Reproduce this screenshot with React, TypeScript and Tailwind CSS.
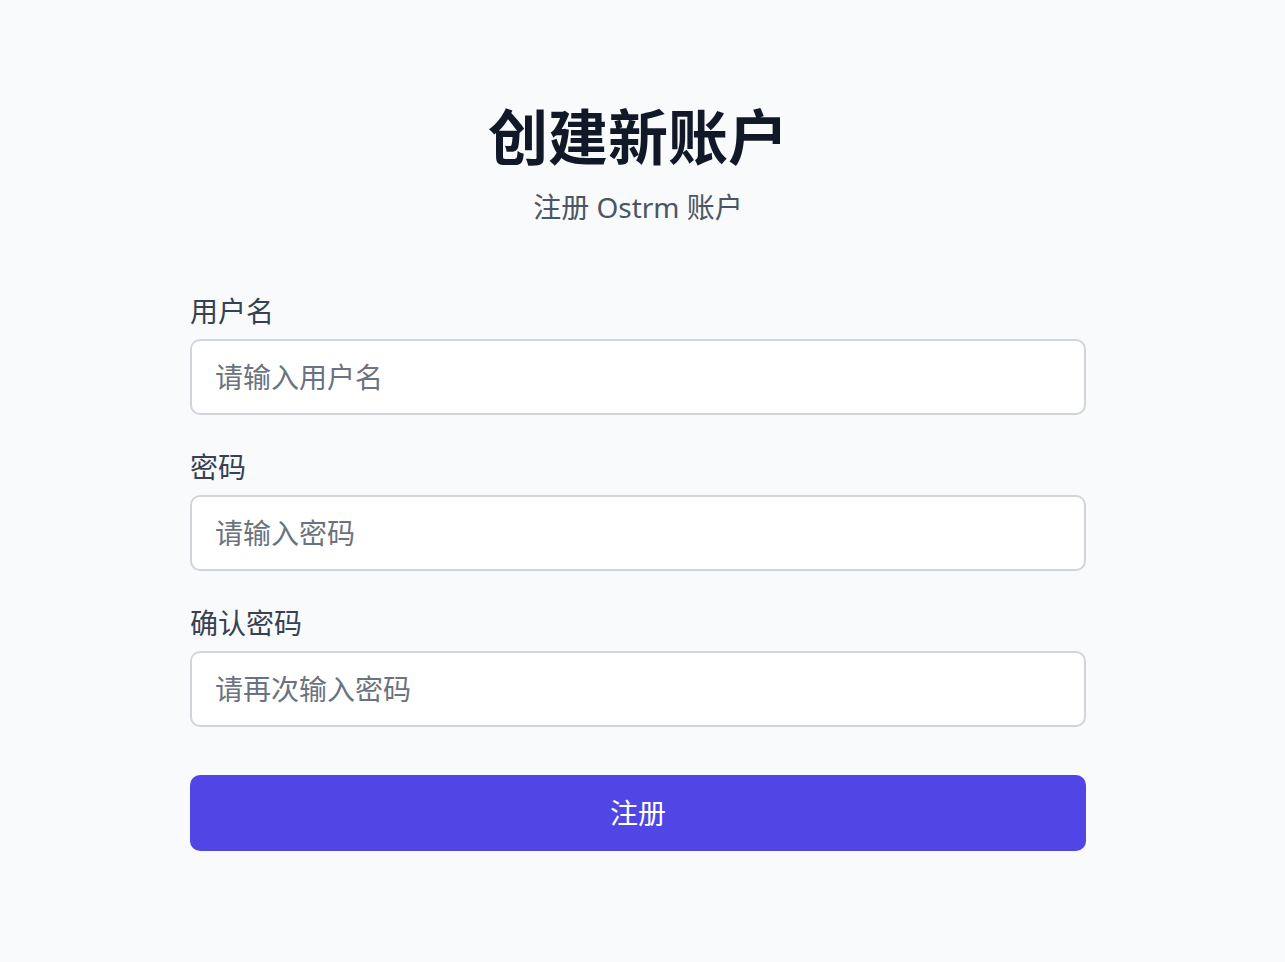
export default function App() {
	return (
		<div
			className="min-h-screen bg-[#f9fafb] pr-[9px] pt-[101px]"
			style={{ fontFamily: '"Noto Sans", "Noto Sans CJK SC", sans-serif' }}
		>
			<div className="mx-auto w-[896px]">
				<h1 className="text-center text-[60px] font-bold leading-[72px] text-[#111827]">创建新账户</h1>
				<p className="mt-[14px] text-center text-[28px] leading-[40px] text-[#4b5563]">注册 Ostrm 账户</p>
				<form className="mt-[64px] flex flex-col gap-[32px]">
					<div className="flex flex-col gap-[8px]">
						<label className="text-[28px] leading-[40px] text-[#374151]">用户名</label>
						<input
							type="text"
							placeholder="请输入用户名"
							className="h-[76px] w-full rounded-[10px] border-2 border-[#d1d5db] bg-white px-[23px] text-[28px] text-[#111827] placeholder:text-[#6b7280] focus:outline-none"
						/>
					</div>
					<div className="flex flex-col gap-[8px]">
						<label className="text-[28px] leading-[40px] text-[#374151]">密码</label>
						<input
							type="password"
							placeholder="请输入密码"
							className="h-[76px] w-full rounded-[10px] border-2 border-[#d1d5db] bg-white px-[23px] text-[28px] text-[#111827] placeholder:text-[#6b7280] focus:outline-none"
						/>
					</div>
					<div className="flex flex-col gap-[8px]">
						<label className="text-[28px] leading-[40px] text-[#374151]">确认密码</label>
						<input
							type="password"
							placeholder="请再次输入密码"
							className="h-[76px] w-full rounded-[10px] border-2 border-[#d1d5db] bg-white px-[23px] text-[28px] text-[#111827] placeholder:text-[#6b7280] focus:outline-none"
						/>
					</div>
					<button
						type="button"
						className="mt-[16px] h-[76px] w-full rounded-[10px] bg-[#4f46e5] text-[28px] text-white"
					>
						注册
					</button>
				</form>
			</div>
		</div>
	);
}
